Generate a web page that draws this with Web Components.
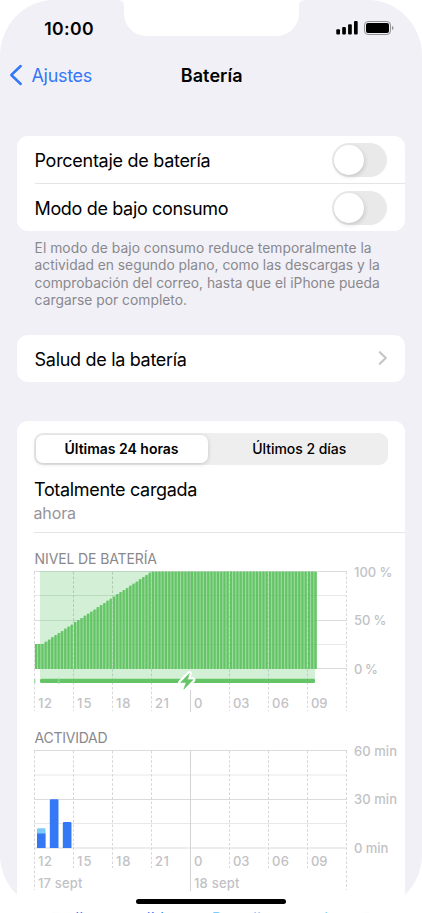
<!DOCTYPE html>
<html lang="es">
<head>
<meta charset="utf-8">
<title>Batería</title>
<style>
html,body{margin:0;padding:0;background:#fff;overflow:hidden}
body{font-family:Inter,"Liberation Sans",sans-serif;color:#000;width:422px;height:913px}
</style>
</head>
<body>
<phone-screen>
  <status-bar slot="status"></status-bar>
  <nav-bar slot="nav"></nav-bar>
  <settings-card>
    <toggle-row><fit-text w="175.8">Porcentaje de batería</fit-text></toggle-row>
    <toggle-row divided><fit-text w="193.6">Modo de bajo consumo</fit-text></toggle-row>
  </settings-card>
  <foot-note></foot-note>
  <settings-card style="margin-top:25px"><link-row><fit-text w="152">Salud de la batería</fit-text></link-row></settings-card>
  <settings-card style="margin-top:38.5px">
    <segmented-control></segmented-control>
    <charge-status></charge-status>
    <battery-chart></battery-chart>
    <activity-chart></activity-chart>
    <chart-legend></chart-legend>
  </settings-card>
</phone-screen>
<script>
class Base extends HTMLElement{
  constructor(){super();this.attachShadow({mode:'open'}).innerHTML=this.view();}
}
/* Single-line label whose tracking is set so that it takes up w pixels. */
class FitText extends Base{
  view(){return `<style>:host{display:inline-block;white-space:nowrap}span{display:inline-block}</style><span><slot></slot></span>`;}
  connectedCallback(){
    const s=this.shadowRoot.querySelector('span'),w=parseFloat(this.getAttribute('w'));
    if(!w)return;
    s.style.letterSpacing='0px';
    const n=this.textContent.length;
    s.style.letterSpacing=((w-s.getBoundingClientRect().width)/n).toFixed(3)+'px';
  }
}
class PhoneScreen extends Base{
  view(){return `<style>
    :host{display:block;position:relative;width:422px;height:913px;background:#f1f0f6;border-radius:54px 54px 62px 62px / 56px 56px 58px 58px;overflow:hidden}
    .notch{position:absolute;left:118px;top:0}
    .home{position:absolute;left:136px;top:899px;width:150px;height:5px;border-radius:3px;background:#000}
    main{padding:0 17px;display:flex;flex-direction:column}
    svg{display:block}
  </style><slot name="status"></slot><slot name="nav"></slot><main><slot></slot></main>
  <svg class="notch" width="187" height="37" viewBox="118 0 187 37"><path fill="#fff" d="M118 0Q124 0 124 6V13.500A22.500 22.500 0 0 0 146.500 36H276.500A22.500 22.500 0 0 0 299 13.500V6Q299 0 305 0Z"/></svg>
  <div class="home"></div>`;}
}
class StatusBar extends Base{
  view(){return `<style>
    :host{display:flex;height:56px;box-sizing:border-box;padding:0 28px 0 44.300px;justify-content:space-between;align-items:center;font-size:17.600px;font-weight:600}
    svg{display:block}
  </style><fit-text w="49.8">10:00</fit-text>
  <svg width="58" height="16" viewBox="336 20 58 16">
   <g fill="#000"><rect x="336.300" y="29.300" width="3.700" height="5.200" rx="1"/><rect x="342.200" y="27" width="3.700" height="7.500" rx="1"/><rect x="348.100" y="24.200" width="3.700" height="10.300" rx="1"/><rect x="354" y="21" width="3.700" height="13.500" rx="1"/>
   <rect x="366" y="23" width="23" height="10" rx="2"/><path d="M392 26V30Q393.500 29.500 393.500 28T392 26Z" fill="#929195"/></g>
   <rect x="364.500" y="21.500" width="26" height="13" rx="3.600" fill="none" stroke="#929195"/></svg>`;}
}
class NavBar extends Base{
  view(){return `<style>
    :host{display:grid;grid-template-columns:1fr auto 1fr;align-items:center;height:38px;padding:0 8.500px 42.300px 9px;font-size:18px}
    .back{display:flex;align-items:center;gap:8.500px;color:#3478f6}
    .title{font-weight:600;transform:translateX(.5px)}svg{display:block}
  </style><div class="back"><svg width="14" height="22" viewBox="0 0 14 22"><path d="M11.700 2L2.300 11L11.700 20" fill="none" stroke="#3478f6" stroke-width="2.500" stroke-linecap="round" stroke-linejoin="round"/></svg><fit-text w="60.5">Ajustes</fit-text></div>
  <div class="title"><fit-text w="62">Batería</fit-text></div><div></div>`;}
}
class SettingsCard extends Base{
  view(){return `<style>:host{display:block;background:#fff;border-radius:11px;overflow:hidden;flex:none}</style><slot></slot>`;}
}
class ToggleRow extends Base{
  view(){return `<style>
    :host{display:flex;position:relative;height:47.500px;align-items:center;justify-content:space-between;padding:0 18px 0 17.500px;font-size:18px}
    :host([divided])::before{content:"";position:absolute;left:18px;right:0;top:-.5px;height:1px;background:#e4e4e6}
    ::slotted(*){padding-top:1px}
    .track{width:55px;height:34px;border-radius:17px;background:#e9e9ea;display:flex;align-items:center;padding-left:2px;box-sizing:border-box}
    .knob{width:30px;height:30px;border-radius:50%;background:#fff;box-shadow:1px 2px 4px rgba(0,0,0,.14)}
  </style><slot></slot><div class="track"><div class="knob"></div></div>`;}
}
class FootNote extends Base{
  view(){return `<style>
    :host{display:flex;flex-direction:column;align-items:flex-start;padding:8.700px 17px 0 17.600px;font-size:13.800px;line-height:17.400px;color:#89888d}
  </style><fit-text w="337">El modo de bajo consumo reduce temporalmente la</fit-text><fit-text w="345.2">actividad en segundo plano, como las descargas y la</fit-text><fit-text w="345.2">comprobación del correo, hasta que el iPhone pueda</fit-text><fit-text w="152.5">cargarse por completo.</fit-text>`;}
}
class LinkRow extends Base{
  view(){return `<style>
    :host{display:flex;height:47.500px;align-items:center;justify-content:space-between;padding:0 17px 0 17.600px;font-size:18px}
    ::slotted(*){padding-top:1.500px}
    svg{display:block}
  </style><slot></slot><svg width="10" height="16" viewBox="0 0 10 16"><path d="M1.800 2.200L7.800 8L1.800 13.800" fill="none" stroke="#c4c4c6" stroke-width="2.100" stroke-linecap="round" stroke-linejoin="round"/></svg>`;}
}
class SegmentedControl extends Base{
  view(){return `<style>
    :host{display:grid;grid-template-columns:172px 1fr;height:32px;box-sizing:border-box;margin:12px 17px 0 16.500px;padding:2px;border-radius:9px;background:#eeeeee;font-size:14px;font-weight:500}
    div{display:flex;align-items:center;justify-content:center}
    .on{background:#fff;border-radius:7px;font-weight:600;box-shadow:0 1px 4px rgba(0,0,0,.18)}
    .off{padding-left:5px}
  </style><div class="on"><fit-text w="114">Últimas 24 horas</fit-text></div><div class="off"><fit-text w="94">Últimos 2 días</fit-text></div>`;}
}
class ChargeStatus extends Base{
  view(){return `<style>
    :host{display:flex;flex-direction:column;align-items:flex-start;height:68px;box-sizing:border-box;margin-left:17px;padding-top:13px;border-bottom:1px solid #e4e4e6;font-size:18px;line-height:24px}
    .sub{font-size:16px;color:#959499;line-height:23px;margin-left:-.5px}
  </style><fit-text w="163">Totalmente cargada</fit-text><fit-text class="sub" w="42.4">ahora</fit-text>`;}
}
const chartStyle=`<style>:host{display:block}svg{display:block;font-family:Inter,"Liberation Sans",sans-serif}
 .t{font-size:14px;fill:#89888d}.l{font-size:13px;font-weight:450;fill:#c2c2c5}</style>`;
const txt=(c,x,y,w,s)=>`<text class="${c}" x="${x}" y="${y}" textLength="${w}">${s}</text>`;
const hLines=ys=>ys.map((y,i)=>`<path d="M34 ${y}H347" stroke="${i%2?'#e8e8ea':'#dbdbdd'}"/>`).join('');
const hours=['12','15','18','21','0','03','06','09'];
const hourW=[14,14.5,14.5,14,8,16.5,17,16.5];
const hourLabels=y=>hours.map((h,i)=>txt('l',38+i*39,y,hourW[i],h)).join('');
class BatteryChart extends Base{
  view(){
    let bars='';
    for(let i=0;i<87;i++){
      const top=i<3?644:i<36?Math.round((641.5-(i-3)*2.15)*2)/2:571.5;
      bars+=`<rect x="${34.9+i*3.25}" y="${top}" width="2.100" height="${669-top}" rx=".6"/>`;
    }
    let v='';
    for(let i=0;i<9;i++){
      const x=34.5+i*39;
      if(i===4){v+='<path d="M190.500 571V669" stroke="#8fbf93" opacity=".5"/><path d="M190.500 690V712" stroke="#d4d4d6"/>';continue;}
      const inBars=i>4&&i<8;
      v+=`<path d="M${x} 572V711" stroke="#d8d8da" stroke-dasharray="2.600 2"/>`;
      if(inBars)v+=`<path d="M${x} 572V669" stroke="#b4e2b7" stroke-dasharray="2.600 2"/>`;
      else if(i>0&&i<4)v+=`<path d="M${x} 572V${[0,620,596,572][i]}" stroke="#a9cdad" stroke-dasharray="2.600 2"/><path d="M${x} ${[0,620,596,572][i]}V669" stroke="#a5dca8" stroke-dasharray="2.600 2"/>`;
      if(i>0&&i<8)v+=`<path d="M${x} 669V679" stroke="#b2d2b5" stroke-dasharray="2.600 2"/>`;
    }
    const bolt='M189.300 673.500L180.600 682.600H186.200L183.800 689.200L193 679.700H187.500Z';
    return chartStyle+`<svg width="388" height="184" viewBox="17 533 388 184">
    ${txt('t',34.6,563.7,122.4,'NIVEL DE BATERÍA')}
    ${hLines([571.5,595.5,620.5,644.5,668.5])}
    <rect x="40" y="572" width="275" height="108" fill="#d3f0d7"/>
    <g stroke="#a9cfae" stroke-opacity=".6"><path d="M40 571.500H315M40 595.500H315M40 620.500H315M40 644.500H315"/></g>
    <rect x="35" y="644" width="10" height="25" fill="#9bdb9e"/><path d="M42 645L152 572H317V669H42Z" fill="#9bdb9e"/>
    <g fill="#65c466">${bars}</g>
    <g stroke="#48a94e" stroke-opacity=".1"><path d="M112 595.500H317M74 620.500H317M35 644.500H317"/></g>
    ${v}
    <rect x="34" y="679" width="1.500" height="4" fill="#a5dfa8"/><rect x="40" y="678.700" width="275" height="4.300" rx="1.500" fill="#65c466"/><path d="M58.800 678V684" stroke="#9bdb9d" stroke-width="1"/>
    <path d="${bolt}" fill="#fff" stroke="#fff" stroke-width="5" stroke-linejoin="round"/><path d="${bolt}" fill="#65c466" stroke="#65c466" stroke-width=".6" stroke-linejoin="round"/>
    ${hourLabels(708.3)}
    ${txt('l',354,576.7,38.5,'100 %')}${txt('l',354,625.3,32.5,'50 %')}${txt('l',354,674,24,'0 %')}
    </svg>`;
  }
}
class ActivityChart extends Base{
  view(){
    let v='';
    for(let i=0;i<9;i++) v+=i===4?`<path d="M190.500 751V891" stroke="#d4d4d6"/>`
      :`<path d="M${34.5+i*39} 751V${i%8?868:890}" stroke="#d6d6d8" stroke-dasharray="2.600 2"/>`;
    return chartStyle+`<svg width="388" height="175" viewBox="17 717 388 175">
    ${txt('t',34.6,743.3,73,'ACTIVIDAD')}
    ${hLines([750.5,775,799.5,823.5,848])}${v}
    <path d="M37 848V829.500Q37 828.300 38.200 828.300H44.300Q45.500 828.300 45.500 829.500V848Z" fill="#7dcafa"/>
    <path d="M37 833.500H45.500V848H37Z" fill="#3478f6"/>
    <path d="M49.800 848V800.500Q49.800 799.300 51 799.300H57.300Q58.500 799.300 58.500 800.500V848ZM62.800 848V823.200Q62.800 822 64 822H70.300Q71.500 822 71.500 823.200V848Z" fill="#3478f6"/>
    ${hourLabels(866)}
    ${txt('l',38,888,44.5,'17 sept')}${txt('l',194,888,45.5,'18 sept')}
    ${txt('l',354,755.7,43,'60 min')}${txt('l',354,804.3,43,'30 min')}${txt('l',354,853,34.3,'0 min')}
    </svg>`;
  }
}
class ChartLegend extends Base{
  view(){return `<style>
    :host{display:grid;grid-template-columns:178px 1fr;padding:16.500px 0 0 17px;font-size:14.500px;line-height:20px;height:24px}
    .on{color:#3478f6}.off{color:#7dcafa}
  </style><fit-text class="on" w="139">Pantalla encendida</fit-text><fit-text class="off" w="125">Pantalla apagada</fit-text>`;}
}
customElements.define('fit-text',FitText);
customElements.define('status-bar',StatusBar);
customElements.define('nav-bar',NavBar);
customElements.define('toggle-row',ToggleRow);
customElements.define('foot-note',FootNote);
customElements.define('link-row',LinkRow);
customElements.define('segmented-control',SegmentedControl);
customElements.define('charge-status',ChargeStatus);
customElements.define('battery-chart',BatteryChart);
customElements.define('activity-chart',ActivityChart);
customElements.define('chart-legend',ChartLegend);
customElements.define('settings-card',SettingsCard);
customElements.define('phone-screen',PhoneScreen);
/* Tracking depends on the font sizes set by every host, so it is settled once all are in place. */
const settle=root=>root.querySelectorAll('*').forEach(e=>{
  if(e instanceof FitText)e.connectedCallback();
  if(e.shadowRoot)settle(e.shadowRoot);
});
settle(document);
</script>
</body>
</html>
